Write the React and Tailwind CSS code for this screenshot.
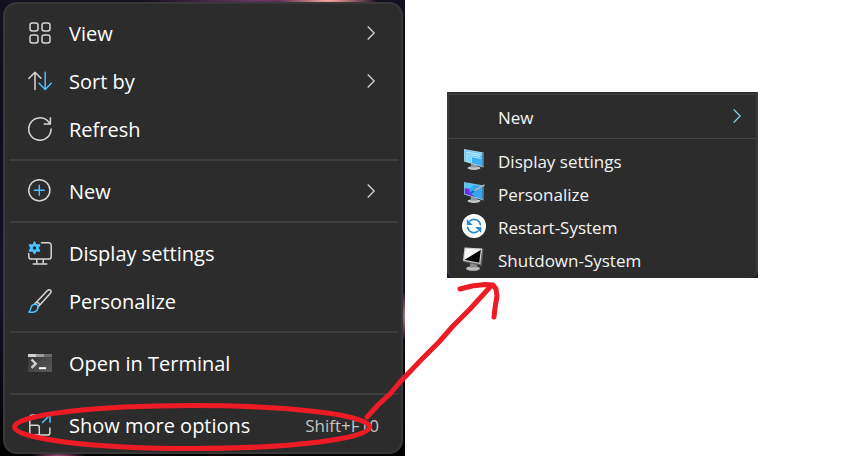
import React from "react";

const ink = "#d6d6d6";
const blue = "#4cc2ff";

function Icon({ children }) {
  return (
    <svg width="24" height="24" viewBox="0 0 24 24" fill="none" stroke={ink} strokeWidth="1.5" strokeLinecap="round" strokeLinejoin="round" aria-hidden="true" className="shrink-0">
      {children}
    </svg>
  );
}

const ViewIcon = () => (
  <Icon>
    <rect x="2" y="2" width="8" height="8" rx="2.2" />
    <rect x="14" y="2" width="8" height="8" rx="2.2" />
    <rect x="2" y="14" width="8" height="8" rx="2.2" />
    <rect x="14" y="14" width="8" height="8" rx="2.2" />
  </Icon>
);

const SortIcon = () => (
  <Icon>
    <path d="M7 20.5V3.3M.8 9.5 7 3.3l6 6" />
    <path d="M17.2 3.3v17.2M11 14.3l6.2 6.2 6-6.2" stroke={blue} />
  </Icon>
);

const RefreshIcon = () => (
  <Icon>
    <path d="M23.1 12A11.2 11.2 0 1 1 20 4.3L22.4 7M22.4.8V7h-6.2" />
  </Icon>
);

const NewIcon = () => (
  <Icon>
    <circle cx="11.3" cy="11.3" r="10.6" />
    <path d="M11.3 6.3v10M6.3 11.3h10" stroke={blue} />
  </Icon>
);

const DisplayIcon = () => (
  <Icon>
    <path d="M13.5 1.8h7.1a2.6 2.6 0 0 1 2.6 2.6v11a2.6 2.6 0 0 1-2.6 2.6H3.4A2.6 2.6 0 0 1 .8 15.4v-3M8.8 18v4.500M15.200 18v4.500M5.200 23h13.600" />
    <path d="m6.500.8 1.700 3 3.800 0-1.700 3.200L12 10.200l-3.800 0-1.700 3-1.700-3-3.800 0 1.700-3.200L1 3.800l3.800 0z" fill={blue} stroke={blue} strokeWidth="1" />
    <circle cx="6.500" cy="7" r="1.700" fill="#2c2c2c" stroke="none" />
  </Icon>
);

const BrushIcon = () => (
  <Icon>
    <path d="M6.700 15 19.400 1.600c1-1 2.300-1.100 3.100-.4s.8 2-.1 3L9.800 18.200M8.700 13c1.600.5 2.700 1.600 3.100 3" />
    <path d="M6.700 15.200c2.400-.2 4 1.900 3.100 4.200-1.200 3.600-5.500 4.300-9 3.700 1.700-.9 1.600-2.200 2-3.900.5-2.300 1.800-3.800 3.900-4z" stroke={blue} />
  </Icon>
);

const TerminalIcon = () => (
  <Icon>
    <defs>
      <linearGradient id="terminal" x1="0" y1="0" x2="1" y2="1">
        <stop offset="0" stopColor="#343434" />
        <stop offset="1" stopColor="#5a5a5a" />
      </linearGradient>
    </defs>
    <path d="M0 3h24v18H0z" fill="url(#terminal)" stroke="none" />
    <path d="M0 3h8v3H0z" fill="#d0d0d0" stroke="none" />
    <path d="M8 3h8v3H8z" fill="#9b9b9b" stroke="none" />
    <path d="M16 3h8v3h-8z" fill="#6a6a6a" stroke="none" />
    <path d="m3.500 8.500 4.300 4.200-4.300 4.200" stroke="#cfcfcf" strokeWidth="2.400" strokeLinecap="butt" strokeLinejoin="miter" />
    <path d="M11 17.200h7" stroke="#fff" strokeWidth="2" strokeLinecap="butt" />
  </Icon>
);

const MoreIcon = () => (
  <Icon>
    <path d="M9.500 2H4a2.200 2.200 0 0 0-2.200 2.200v15.600A2.200 2.200 0 0 0 4 22h15.700a2.200 2.200 0 0 0 2.200-2.200V15M1.800 12.200h7.500a2 2 0 0 1 2 2V22" />
    <path d="M14.500 9.500 22 2M14.800 2H22v7.200" stroke={blue} />
  </Icon>
);

function MonitorBody({ rim, screen }) {
  return (
    <g stroke="none">
      <ellipse cx="12" cy="20" rx="6.500" ry="1.900" fill="#c3c8cb" />
      <path d="m9 15.500 6 1v3H9z" fill="#8e979c" />
      <path d="M2 1 21.500 4.500v15L2 13.500z" fill={rim} />
      <path d="M2.800 2 20.200 5.200v12.900L2.800 12.800z" fill={screen} />
      <path d="m20.200 5.200 1.300-.7v15l-1.300-1.400z" fill="#35708f" />
    </g>
  );
}

const MonitorIcon = () => (
  <Icon>
    <MonitorBody rim="#a9d4e6" screen="#6cc9f8" />
    <path d="m9.500 7.500 10.700 2v8.600L9.500 14.900z" fill="#3db0f2" stroke="none" />
    <path d="M5 13V4.200L18.500 6.700M7.200 13.700V6.500L17.500 8.400M9.400 14.300V8.600L19 10.400" stroke="#d8f4ff" strokeWidth=".8" />
  </Icon>
);

const PaintMonitorIcon = () => (
  <Icon>
    <MonitorBody rim="#8cc4dc" screen="#3aa6f2" />
    <g stroke="none">
      <path d="m2.800 7 4.700.8v4l6 4.300-10.700-3.300z" fill="#7a25e8" />
      <path d="M2.800 2 12 3.700 7.500 7.800 2.800 7z" fill="#55c5fb" />
    </g>
    <path d="m8 12.500 5.500-3.500" stroke="#1f62c4" strokeWidth="1.600" />
    <path d="m12.500 9.500 9.700-5.300" stroke="#aeb4b8" strokeWidth="1.500" />
  </Icon>
);

const RestartIcon = () => (
  <Icon>
    <circle cx="12" cy="12" r="12" fill="#fff" stroke="none" />
    <path d="M8 6.800A6.600 6.600 0 0 1 18.500 10.800M16 17.200A6.600 6.600 0 0 1 5.500 13.200" stroke="#258bd1" strokeWidth="1.600" />
    <path d="M4.800 5V11h6zM19.200 19V13h-6z" fill="#258bd1" stroke="none" />
  </Icon>
);

const ShutdownIcon = () => (
  <Icon>
    <g stroke="none">
      <ellipse cx="11" cy="21.500" rx="6.800" ry="2.300" fill="#bdbdbd" />
      <path d="m8 15.500 7 1v4H8z" fill="#8b8b8b" />
      <path d="M3 .5 21.500 1.700 19.800 19 1.200 14.700z" fill="#606060" />
      <path d="M2.500.5 20.200 1.500 18.300 17 1 13.700z" fill="#d0d0d0" />
      <path d="M18.800 2.700 17.200 15.700 2.300 12.700z" fill="#060606" />
      <path d="M3.700 1.700 18.800 2.700 2.300 12.700z" fill="#f8f8f8" />
    </g>
  </Icon>
);

function Chevron({ color = ink }) {
  return (
    <svg width="8" height="14" viewBox="0 0 8 14" fill="none" stroke={color} strokeWidth="1.300" aria-hidden="true" className="shrink-0">
      <path d="m.7.5 6.500 6.500L.7 13.500" />
    </svg>
  );
}

function MenuRow({ icon, label, submenu, shortcut }) {
  return (
    <button type="button" role="menuitem" className="flex h-12 w-full items-center gap-[17px] pl-[23px] pr-[22px] text-left text-[20px] leading-6 text-white hover:bg-white/5">
      {icon}
      <span className="grow whitespace-nowrap pt-0.5">{label}</span>
      {submenu && <span className="pr-1"><Chevron /></span>}
      {shortcut && <kbd className="pt-0.5 font-[inherit] text-[17px] text-[#c4c4c4]">{shortcut}</kbd>}
    </button>
  );
}

function Divider() {
  return <div role="separator" className="my-1.5 ml-[5px] mr-[3px] h-0.5 bg-[#3d3d3d]" />;
}

function ClassicRow({ icon, label, submenu }) {
  return (
    <button type="button" role="menuitem" className="flex h-[33px] w-full items-center gap-3 pl-[13px] pr-[15px] text-left text-[17px] leading-6 text-[#f4f4f4] hover:bg-white/5">
      <span className="w-6 shrink-0 pb-[3px]">{icon}</span>
      <span className="grow whitespace-nowrap">{label}</span>
      {submenu && <span className="pb-1"><Chevron color="#7fd4e6" /></span>}
    </button>
  );
}

function Annotation() {
  return (
    <svg viewBox="0 0 842 456" preserveAspectRatio="none" fill="none" stroke="#ed1c24" strokeWidth="5" strokeLinecap="round" strokeLinejoin="round" aria-hidden="true" className="pointer-events-none absolute inset-0 h-full w-full">
      <ellipse cx="192" cy="427" rx="177.500" ry="21.500" />
      <path d="M367 417 379 404 390 394 400 382 423 358 439 342 453 326 470 309 491 286" />
      <path d="M460 289 472 286 485 284.500 493 285 496 289 497 296 495 308 494 317" />
    </svg>
  );
}

export default function App() {
  return (
    <main className="relative grid grid-cols-[405fr_437fr] bg-white font-['Open_Sans','Noto_Sans',sans-serif]">
      <section className="bg-[radial-gradient(ellipse_50px_12px_at_328px_0px,#ffaaa0,transparent),radial-gradient(ellipse_120px_8px_at_260px_0px,#6b3a68,transparent),radial-gradient(ellipse_5px_25px_at_405px_316px,#c97b9d,transparent),radial-gradient(ellipse_28px_5px_at_58px_456px,#a34d7b,transparent),linear-gradient(#15101f,#0e0b1c_30%,#17102a_65%,#000)] py-0.5 pl-[3px] pr-0.5">
        <div role="menu" aria-label="Desktop menu" className="rounded-[14px] border-2 border-[#383838] bg-[#2c2c2c] pb-[3px] pt-[5px]">
          <MenuRow icon={<ViewIcon />} label="View" submenu />
          <MenuRow icon={<SortIcon />} label="Sort by" submenu />
          <MenuRow icon={<RefreshIcon />} label="Refresh" />
          <Divider />
          <MenuRow icon={<NewIcon />} label="New" submenu />
          <Divider />
          <MenuRow icon={<DisplayIcon />} label="Display settings" />
          <MenuRow icon={<BrushIcon />} label="Personalize" />
          <Divider />
          <MenuRow icon={<TerminalIcon />} label="Open in Terminal" />
          <Divider />
          <MenuRow icon={<MoreIcon />} label="Show more options" shortcut="Shift+F10" />
        </div>
      </section>
      <section className="pl-[42px] pr-[84px] pt-[92px]">
        <div className="bg-[#21182c]">
          <div role="menu" aria-label="Classic menu" className="rounded-b-[8px] border-x-2 border-[#3a3a3a] bg-[#2c2c2c] pb-px pt-0.5">
            <div role="separator" className="h-px bg-[#434343]" />
            <div className="pb-1 pt-1.5">
              <ClassicRow label="New" submenu />
            </div>
            <div role="separator" className="mb-1.5 h-px bg-[#434343]" />
            <ClassicRow icon={<MonitorIcon />} label="Display settings" />
            <ClassicRow icon={<PaintMonitorIcon />} label="Personalize" />
            <ClassicRow icon={<RestartIcon />} label="Restart-System" />
            <ClassicRow icon={<ShutdownIcon />} label="Shutdown-System" />
          </div>
        </div>
      </section>
      <Annotation />
    </main>
  );
}
